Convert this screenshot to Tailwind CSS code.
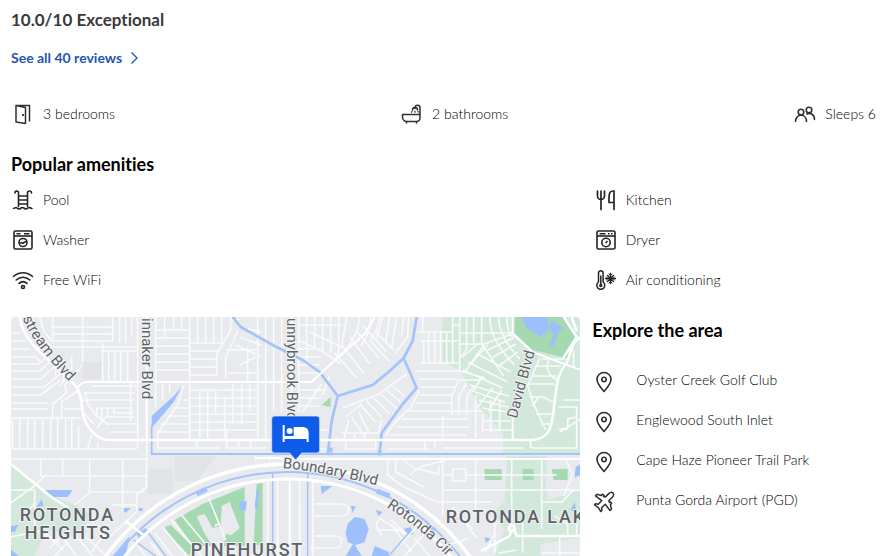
<!DOCTYPE html>
<html lang="en">
<head>
    <meta charset="UTF-8">
    <meta name="viewport" content="width=device-width, initial-scale=1.0">
    <title>Property overview</title>
    <script src="https://cdn.jsdelivr.net/npm/@tailwindcss/browser@4"></script>
</head>
<body class="min-h-screen flex flex-col bg-white px-[11px] font-['Lato',sans-serif] text-sm font-light text-black [font-variant-ligatures:none]">
    <!-- Rating -->
    <header class="pt-2">
        <h2 class="text-[17px] leading-6 font-bold text-[#3a3a3c]">10.0/10 Exceptional</h2>
        <a href="#reviews" class="mt-4 inline-flex items-center gap-2 leading-5 font-bold text-[#1f55b5]">
            See all 40 reviews
            <svg class="h-3 w-2" viewBox="0 0 8 12" fill="none" stroke="currentColor" stroke-width="1.4"><path d="M1.5.5 7 6l-5.500 5.500"/></svg>
        </a>
    </header>

    <!-- Room summary -->
    <ul class="mt-[26px] flex justify-between pr-1.5 h-10 items-center">
        <li class="flex items-center gap-2">
            <svg class="size-6" viewBox="0 0 24 24" fill="none" stroke="#303034" stroke-width="1.500" stroke-linejoin="round"><path d="M5 3.500V20l9.500 1.500V5.500L5 3.500h13.500V19.500"/><path d="M12 12v2" stroke-width="1.800"/></svg>
            3 bedrooms
        </li>
        <li class="flex items-center gap-2">
            <svg class="size-6" viewBox="0 0 24 24" fill="none" stroke="#303034" stroke-width="1.500" stroke-linecap="round" stroke-linejoin="round"><path d="M2.500 12.500H20V16a3.500 3.500 0 0 1-3.500 3.500H7A4.500 4.500 0 0 1 2.500 15zM20 12.500V6a2.500 2.500 0 0 0-5-.5v1M6.500 20v1M16.500 20v1M12.500 8a2.500 2.500 0 0 1 5 0"/><path d="M12 9.500l-.5.8M15 9.200v1M18 9.500l.3.600" stroke-width="1.200"/></svg>
            2 bathrooms
        </li>
        <li class="flex items-center gap-2">
            <svg class="size-6" viewBox="0 0 24 24" fill="none" stroke="#303034" stroke-width="1.600" stroke-linecap="round"><circle cx="8" cy="10" r="2.800"/><path d="M2.500 19.500c0-3.700 2.200-6.200 5.500-6.200s5.500 2.500 5.500 6.200"/><circle cx="16" cy="8" r="2.800"/><path d="M13.800 12c3.700-1.800 7.700.7 7.700 5.500"/></svg>
            Sleeps 6
        </li>
    </ul>

    <!-- Amenities -->
    <section class="mt-[18px]">
        <h3 class="text-lg leading-6 font-bold text-black">Popular amenities</h3>
        <ul class="mt-1 grid grid-cols-[57fr_29fr] gap-x-4">
            <li class="flex h-10 items-center gap-2">
                <svg class="size-6" viewBox="0 0 24 24" fill="none" stroke="#242428" stroke-width="1.600" stroke-linecap="round"><path d="M7.500 18.500V5a2 2 0 0 0-2-2 1.800 1.800 0 0 0-1.500 2M16.500 18.500V5a2 2 0 0 1 2-2 1.800 1.800 0 0 1 2 2M7.500 8h9M7.500 12h9M7.500 16h9"/><path d="M2.500 20.500c1.200 0 1.600-1 2.500-1s1.600 1.500 3 1.500 2-1.500 3.500-1.500 2 1.500 3.500 1.500 2-1.500 3.300-1.500 1.500 1 2.700 1"/></svg>
                Pool
            </li>
            <li class="flex h-10 items-center gap-2">
                <svg class="size-6" viewBox="0 0 24 24" fill="none" stroke="#242428" stroke-width="1.700" stroke-linecap="round" stroke-linejoin="round"><path d="M3.500 3v5a3.500 3.500 0 0 0 7 0V3M7 3v18.500M20 21.500V3h-1c-2.500 0-4 2.500-4 6v5.500h5"/></svg>
                Kitchen
            </li>
            <li class="flex h-10 items-center gap-2">
                <svg class="size-6" viewBox="0 0 24 24" fill="none" stroke="#242428" stroke-width="1.600"><rect x="3" y="3" width="18" height="18" rx="1.500"/><path d="M3 8h18"/><path d="M5.500 5.700h4M13 5.700h5.500" stroke-width="1.400"/><circle cx="12" cy="14.500" r="4"/><path d="M9 15.500c1.500-2 2.200.5 3.500-.5s1.500-1.500 3-1.500"/></svg>
                Washer
            </li>
            <li class="flex h-10 items-center gap-2">
                <svg class="size-6" viewBox="0 0 24 24" fill="none" stroke="#242428" stroke-width="1.600"><rect x="3" y="3" width="18" height="18" rx="1.500"/><path d="M3 8h18"/><path d="M5.500 5.700h6M14 5.700h1.500M17 5.700h1.500" stroke-width="1.400"/><circle cx="12" cy="14.500" r="4.200"/><path d="m11.500 15 2-2"/></svg>
                Dryer
            </li>
            <li class="flex h-10 items-center gap-2">
                <svg class="size-6" viewBox="0 0 24 24" fill="none" stroke="#242428" stroke-width="1.600" stroke-linecap="round"><path d="M2.500 8.500c5.500-5 13.500-5 19 0M5.200 12c4-3.700 9.600-3.700 13.600 0M8 15.400c2.400-2.200 5.600-2.200 8 0"/><circle cx="12" cy="19" r="1.500"/></svg>
                Free WiFi
            </li>
            <li class="flex h-10 items-center gap-2">
                <svg class="size-6" viewBox="0 0 24 24" fill="none" stroke="#242428" stroke-width="1.500" stroke-linecap="round"><path d="M4.500 14V5a2.300 2.300 0 0 1 4.600 0v9a4 4 0 1 1-4.600 0z"/><path d="M6.800 8v8.500"/><circle cx="6.800" cy="17.500" r="1"/><path d="M16.500 5.500v10M11.500 10.500h10M13.500 7.500l6 6M19.500 7.500l-6 6" stroke-width="1.400"/><path d="m15 6 1.500 1.500L18 6M15 15l1.500-1.500L18 15M12.500 9l1.500 1.500-1.500 1.500M20.500 9 19 10.500l1.500 1.500" stroke-width="1"/></svg>
                Air conditioning
            </li>
        </ul>
    </section>

    <div class="mt-[17px] grid flex-1 grid-cols-[57fr_29fr] gap-x-3">
        <!-- Map -->
        <div class="relative min-h-[236px] overflow-hidden rounded-t bg-[#e8eaed]">
            <svg class="absolute inset-0 size-full" viewBox="11 317 570 239" preserveAspectRatio="xMidYMin slice" role="img" aria-label="Map of the area">
                <!-- land -->
                <path fill="#e1e3e7" d="M148 469h25v25h-25zM175 456h42l-20 25h-22zM83 362h20v17H83z"/>
                <path fill="#d2e8da" d="M443 317h138v136H503v-20l-23-26-20-37-17-8z"/>
                <path fill="#d2e8da" d="M507 456h40v34h34v47l-20 4-20 3v12h-46l10-26-12-17 12-12zM11 465l40 30 24 10 18 10-18 22-28-8-12 27H11z"/>
                <path fill="#e8eaed" d="M545 476h36v14l-33 10z"/>
                <path fill="#a5d9b2" d="M515 317v16l18 17 34 8 9-21-13-20zM485 469h17v11h-17zM523 469h11v11h-11zM552 469h16v11h-14zM322 405l9-8v10z"/>
                <path fill="#a5d9b2" d="M175 520l28-16 42-17v59h-52zM163 528l8-3 21 21-2 10zM257 484l6-1v62h-9z"/>
                <path fill="#e8eaed" d="M197 516l8-2 8 14 8-2 1-20 8-4 10 26-8 7-6-1-2 14h-10l-10-16z"/>
                <!-- water -->
                <g fill="#9dc0fa">
                    <path d="M522 317l5 11 14 9 9-8-3-12zM552 320l11 8-5 6-5 13-3-2 4-11-6-5zM152 428v-12l22-20 8-9-8 15zM45 490h28l-5 7H50zM37 507l5-8 2 7zM11 526l8-1-4 7h-4zM121 508h10l-5 5zM139 508h4v3h-4zM346 533l2-9 7-7 10 2 4 10-4 13-9 3-8-3zM321 486h12l-11 8zM351 506h5l-3 7zM376 510l7 2-4 4zM404 529l7-2 3 7-5 1zM346 556l8-13 8 13zM375 546l14 6v4h-17zM240 502l7-1-1 10-6-1zM257 489l2 1-1 20-3-3zM571 510l4-8 2 11zM576 467l5-3v11l-6 2zM485 537l6 2-5 4zM113 556l17-20-4 20zM11 549l8 7h-8zM210 512l3-3 1 5z"/>
                </g>
                <!-- residential streets -->
                <g fill="none" stroke="#f9fafb" stroke-width="1.600" stroke-linejoin="round">
                    <path d="M11 333h10M11 341h15M11 349h19M11 357h25l5 5M11 364h28l8-7M11 371h29l11-10M11 379h30l17-15M11 387h34l21-18M11 395h30l20-15M11 403h37M11 409h37M11 418h70M11 449h124q3 0 3-4V317M11 459h137"/>
                    <path d="M13 418v30M20 418v30M28 418v30M35 418v30M43 418v30M51 418v30M58 418v30M66 418v30M72 418v30M79 448v-22M88 448l4-13M98 448v-5M40 317l4 14 8 10M33 317l5 16 14 14h85M53 317v22M53 327h60M53 334h60M83 317v25M113 317v24h-52M120 343v-26M126 317v26M132 317v19M52 341h60M83 343v19M103 343v39M109 351v31M115 351v31M121 351v31M128 351v31M103 351h34M56 360v16M64 360v22M72 356v14l-12 16M83 365l-18 20 2 8-14 11v13M62 417v-15l17-12M80 400h55M85 393h50M92 386h45M85 392l4 14 8 10 12 9M97 417v-9h35M102 423v-15M108 408v9h27M114 408v5h20M131 382v39M97 428l11-13M108 424h28M112 432h25M84 413l10 11M65 409h16"/>
                    <path d="M156 317v70M156 330h34M156 338h34M156 346h34M156 354h34M156 362h34M156 370h34M190 317v64M165 317v21M174 317v13M182 317v13M198 317v25M206 317v25M214 317v25M222 317v25M190 343h34M190 351h28M190 359h28M190 367h27M190 375h27M217 375v-20l14-25v-13M226 378v-20l12-27M226 350h32M228 373h30M240 365l16-8M258 317v123M266 317v123M274 317v95M282 317v95M248 347v35M236 345l26 12M241 337l20 8M248 329l13 3M232 320h8M190 382v57M156 382v26M163 384v16M170 384v8M190 390h68M190 398h68M190 406h68M190 414h68M190 422h68M190 430h68M200 391v47M208 391v47M216 391v22M225 398v41M233 384v40M242 384v40M250 384v28M174 408h16M168 416h22M161 424h29M157 432h33M184 400h6M158 448v-15l20-28 6-20M158 448h62M227 430v18h40M239 440v8M251 440v8M197 440v8"/>
                    <path d="M299 317v95M307 317v46M315 317v32M323 317v34M331 317v36M339 317v38M300 325h42M347 317l-5 30-32-15M360 317q-2 25-25 43M371 317q0 17-10 29M380 317q-2 13-9 22M350 337l20 27M357 331l22 27M363 325l24 27M370 340l20 22M376 332l18 18M335 353l22 25M343 346l21 27M300 341l24 11 17 12M300 349h21M300 357h22M300 365h20M300 373h22M300 390h27M300 398h22M300 406h20M322 384l-19 28M330 375l-7 20M300 430h32M305 440v10M318 440v9M328 449h-32"/>
                    <path d="M383 317l-6 21M390 317l-4 25M397 317l-5 30M404 317l-2 19M395 354l13-17 1-20M343 408l36-14 28-20M346 417l16-13M360 404l16 18M367 401l15 16M374 398l16 16M381 394l17 15M387 390l14 12M393 386l12 10M349 420l-5 20M352 417l12 18M359 412l10 20M342 433h37l3-13M346 440v9h30v-9M355 433v6M365 433v6M386 436q8-15 25-28l8-16-6-16M420 341h38M424 341v22M429 332v30M435 332v30M441 332v32M447 332v32M453 332v32M417 332h36v-15M420 363h38M416 371h44M419 379h39M421 387h36M419 395h33M416 403h35M408 411h74M402 419h67M396 427h74M390 435h77M443 416v24M476 395v43M452 415v-18l7-17h22M459 415v-18l8-14M467 415v-18l7-11M425 440v9M435 440v9M387 449h44M443 448h81M531 448h46v-30M531 440v8M423 317v15"/>
                    <path d="M460 317v54l25 7M467 317v33l-7 8M474 317v28M482 317v27l22 32M490 317q0 23 25 48M499 317q-1 18 21 42M507 317q0 14 7 22M453 325h7M460 333h53M460 344h24l28-10M463 357l15-13M472 363l16-18M486 351l27-13M492 358l24-14M499 366l19-14M463 370l40 18M468 362l40 20M478 354l33 18M485 344l-20 28M493 388l-16 20M502 390l-14 22M483 376l-10 16M470 385l39 11M475 392l30 10M479 400l30 7M483 408l26 4M483 414v18M491 400v32M500 400v32M484 421h27M485 430h27M540 358l-12 28 6 18 12 26M528 384h27M532 376h25M536 366h25M542 359h23M530 397h13l10 5M533 406l6-9M537 414h15M541 424h10M559 407h18v10l-9 2v10h-9M563 400h18M574 350v18M549 360q-5 12 8 20M560 432l21-13"/>
                    <path d="M41 459v17h105M63 459v17M90 459v34M123 459v46M147 440v47l-10 7v18l-26 24M75 505l16-13h53M123 493v18M113 505h24M11 503l25-18 11-11M35 490v39M11 490h24M20 522l15-19M11 537l30-6 18 12M40 530l24 20M65 540l12 16M76 535l17 21M50 548l12-12M85 536l22 20M92 552l15-22M55 556l13-14"/>
                    <path d="M388 460v15l16 12 34 15h54M396 460v12l28 15M404 460l10 8 25 6v-8M410 475l10-8 27-7M443 459v56M443 475h10v-6h13v12h-13v-6M466 475h91M476 459v56M512 459v67M542 459v70M443 490h138M542 502h20l12-12M566 459l7 15-9 22M495 523v30M523 523v30M542 553h39M560 536v20M555 516l13 8v12M577 510v26M499 553l18-3M485 553l10-20M447 546l22-8M315 504h26q8 0 8 6t-8 6h-26M315 536h21q6 0 6 6t-6 6h-25M382 535q-10-12-1-16l26 16M391 520l19 17M400 545l16-17M412 552l-18-24M405 556l22-25M430 556l-15-18M386 504l12 9M377 530h23M465 522l12 16M453 507l20 22"/>
                    <path d="M278 478v78M300 478v78M268 480v76M313 480v76M209 498l17 42M215 526l5-3M181 514l35 42M171 519l31 37M163 527l24 29M155 533l18 23M151 542l10 14M138 546l8 10M256 456v5M270 456v5"/>
                </g>
                <!-- canals -->
                <g fill="none" stroke="#a3c3fa" stroke-width="2.400" stroke-linejoin="round">
                    <path d="M233 317l8 10 34 19 28 14 17 12 18 24-6 25-4 34M338 396l35-11 17-14 14-13 9-17 4-24M404 358l13 30-14 16-21 29-2 20" stroke-width="2.700"/>
                    <path d="M152 425v29h429" stroke-width="1.800"/>
                    <path d="M273 473v83M308 473v83M134 540l22 16M146 529l20 27M389 556l20-23" stroke-width="1.500"/>
                    <circle cx="288" cy="690" r="218" stroke-width="2"/>
                    <path d="M197 494l10-5M138 536l9-6M377 491l13 5M426 525l8 7" stroke-width="5"/>
                    <path d="M328 450h5M378 453h4" stroke-width="5"/>
                </g>
                <!-- main roads -->
                <g fill="none" stroke="#fff" stroke-width="2.500" stroke-linejoin="round">
                    <path d="M20 317c4 28 30 41 56 69 9 11 4 27 10 36 5 10 14 18 23 18h421c19 0 22-11 24-30 3-25 3-35 13-47l7-20 7-6"/>
                    <path d="M147 317v123M78 387q5-5 10-5h224l18-17 35-31 10-17M290 478v78M292 317v123M513 317v17l20 18 48 18M513 440v-23M281 459h300M257 458h25" stroke-width="2"/>
                    <path d="M11 464l42 34 16 10M481 551l29-15 3-10 4 10h64M564 317l13 20-14 22M572 317l5 14"/>
                    <circle cx="288" cy="690" r="226" stroke-width="3.500"/>
                    <circle cx="288" cy="690" r="211" stroke-width="3"/>
                    <path d="M126 521l19 15"/>
                    <circle cx="512" cy="528" r="3" fill="#e8eaed"/>
                </g>
                <!-- labels -->
                <defs>
                    <path id="stream" d="M23 318Q36 350 84 396"/>
                    <path id="boundary" d="M283 468Q335 473 405 493"/>
                    <path id="rotonda" d="M387 507Q425 530 462 572"/>
                </defs>
                <g class="font-['Roboto',sans-serif] text-[15px] font-normal" fill="#606368" stroke="#f1f3f4" stroke-width="2" paint-order="stroke" stroke-linejoin="round">
                    <text><textPath href="#stream">stream Blvd</textPath></text>
                    <text transform="translate(142 318) rotate(90)">innaker Blvd</text>
                    <text transform="translate(287 318) rotate(90)">unnybrook Blvd</text>
                    <text transform="translate(517 419) rotate(-75)">David Blvd</text>
                    <text><textPath href="#boundary">Boundary Blvd</textPath></text>
                    <text><textPath href="#rotonda">Rotonda Cir</textPath></text>
                </g>
                <g class="font-['Roboto',sans-serif] text-lg font-medium tracking-widest" fill="#5f6368" stroke="#f1f3f4" stroke-width="2" paint-order="stroke" stroke-linejoin="round">
                    <text x="20" y="521">ROTONDA</text>
                    <text x="25" y="539">HEIGHTS</text>
                    <text x="191" y="556">PINEHURST</text>
                    <text x="446" y="523">ROTONDA LAK</text>
                </g>
                <!-- property marker -->
                <path fill="#0f5ce8" stroke="#d9e5fb" stroke-width=".8" d="M275 416h42q3 0 3 3v31q0 3-3 3h-15l-6 7-6-7h-15q-3 0-3-3v-31q0-3 3-3z"/>
                <g fill="#fff">
                    <path d="M283 425h2v11h9v-9h9q6 0 6 6v9h-2v-3h-22v3h-2z"/>
                    <circle cx="290" cy="431" r="3"/>
                </g>
            </svg>
        </div>

        <!-- Nearby places -->
        <section class="pt-px">
            <h3 class="text-lg leading-6 font-bold text-black">Explore the area</h3>
            <ul class="mt-[18px]">
                <li class="flex h-10 items-center gap-5">
                    <svg class="mt-1 size-6" viewBox="0 0 24 24" fill="none" stroke="#303034" stroke-width="1.600" stroke-linejoin="round"><path d="M12 21.500C8.500 17.500 5 13.300 5 9.500a7 7 0 0 1 14 0c0 3.800-3.500 8-7 12z"/><circle cx="12" cy="9.500" r="2.200"/></svg>
                    Oyster Creek Golf Club
                </li>
                <li class="flex h-10 items-center gap-5">
                    <svg class="mt-1 size-6" viewBox="0 0 24 24" fill="none" stroke="#303034" stroke-width="1.600" stroke-linejoin="round"><path d="M12 21.500C8.500 17.500 5 13.300 5 9.500a7 7 0 0 1 14 0c0 3.800-3.500 8-7 12z"/><circle cx="12" cy="9.500" r="2.200"/></svg>
                    Englewood South Inlet
                </li>
                <li class="flex h-10 items-center gap-5">
                    <svg class="mt-1 size-6" viewBox="0 0 24 24" fill="none" stroke="#303034" stroke-width="1.600" stroke-linejoin="round"><path d="M12 21.500C8.500 17.500 5 13.300 5 9.500a7 7 0 0 1 14 0c0 3.800-3.500 8-7 12z"/><circle cx="12" cy="9.500" r="2.200"/></svg>
                    Cape Haze Pioneer Trail Park
                </li>
                <li class="flex h-10 items-center gap-5">
                    <svg class="mt-1 size-6" viewBox="0 0 24 24" fill="none" stroke="#303034" stroke-width="1.500" stroke-linejoin="round"><path d="M21 3c-1.300-1-3-.6-4.200.6l-3.300 3.300-2-.5.500-1-1.200-1.200-1.500 1.200L5 4.300 3.500 5.800l6.300 4.800-3.500 3.600-2.800-.4L2.500 15l3.800 2.700 2.500 3.800 1.200-1-.4-2.800 3.600-3.500 4.800 6.300 1.500-1.500-1.100-4.300 1.200-1.500-1.200-1.200-1 .5-.5-2 3.400-3.300c1.200-1.200 1.600-2.900.7-4.200z"/></svg>
                    Punta Gorda Airport (PGD)
                </li>
            </ul>
        </section>
    </div>
</body>
</html>
